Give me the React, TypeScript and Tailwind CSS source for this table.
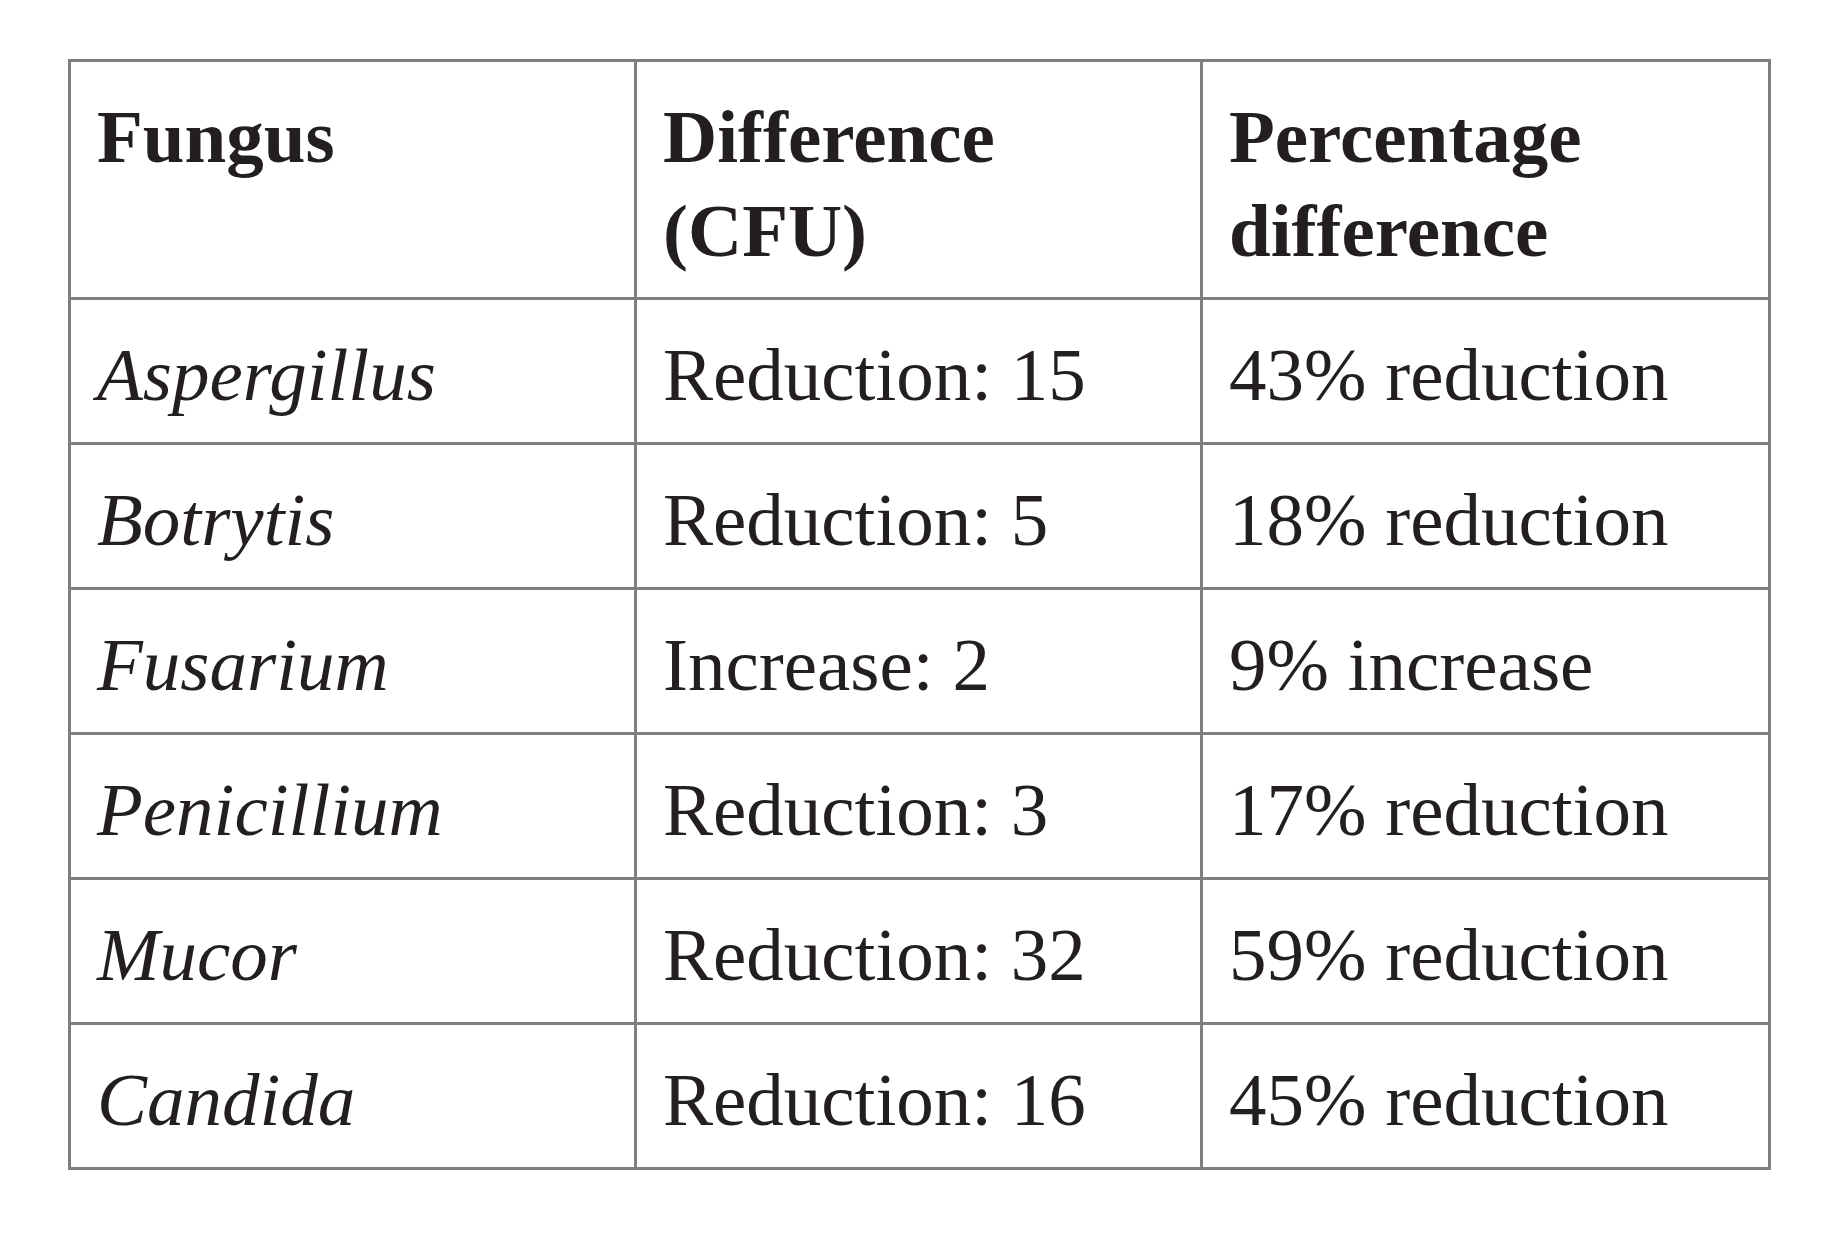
const rows = [
  { fungus: "Aspergillus", diff: "Reduction: 15", pct: "43% reduction" },
  { fungus: "Botrytis", diff: "Reduction: 5", pct: "18% reduction" },
  { fungus: "Fusarium", diff: "Increase: 2", pct: "9% increase" },
  { fungus: "Penicillium", diff: "Reduction: 3", pct: "17% reduction" },
  { fungus: "Mucor", diff: "Reduction: 32", pct: "59% reduction" },
  { fungus: "Candida", diff: "Reduction: 16", pct: "45% reduction" },
];

const cell = "border-[3px] border-[#7f7f7f] align-top pl-[26px] pt-[28px] text-left";

export default function App() {
  return (
    <div className="min-h-screen w-full bg-white pl-[68px] pt-[59px] font-['Liberation_Serif','Times_New_Roman',serif] text-[75px] leading-[94px] text-[#231f20]">
      <table className="w-[1703px] table-fixed border-collapse">
        <colgroup>
          <col className="w-[566px]" />
          <col className="w-[566px]" />
          <col />
        </colgroup>
        <thead>
          <tr className="h-[238px]">
            <th className={`${cell} font-bold`}>Fungus</th>
            <th className={`${cell} font-bold`}>
              Difference
              <br />
              (CFU)
            </th>
            <th className={`${cell} font-bold`}>
              Percentage
              <br />
              difference
            </th>
          </tr>
        </thead>
        <tbody>
          {rows.map((r) => (
            <tr key={r.fungus} className="h-[145px]">
              <td className={`${cell} italic`}>{r.fungus}</td>
              <td className={cell}>{r.diff}</td>
              <td className={cell}>{r.pct}</td>
            </tr>
          ))}
        </tbody>
      </table>
    </div>
  );
}
